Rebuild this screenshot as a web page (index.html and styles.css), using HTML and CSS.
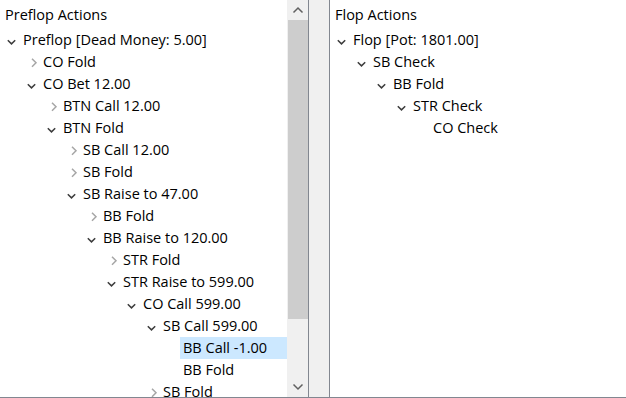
FILE: index.html
```html
<!DOCTYPE html>
<html>
<head>
<meta charset="utf-8">
<link rel="stylesheet" href="styles.css">
</head>
<body>
<div class="window">
  <div class="panel panel-left">
    <div class="tree">
      <div class="header">Preflop Actions</div>
      <div class="row l0"><svg class="tog open" viewBox="0 0 16 22"><path d="M3.8 11.2 L7.5 14.9 L11.2 11.2"/></svg><span>Preflop [Dead Money: 5.00]</span></div>
      <div class="row l1"><svg class="tog closed" viewBox="0 0 16 22"><path d="M8 7.8 L12 11.8 L8 15.8"/></svg><span>CO Fold</span></div>
      <div class="row l1"><svg class="tog open" viewBox="0 0 16 22"><path d="M3.8 11.2 L7.5 14.9 L11.2 11.2"/></svg><span>CO Bet 12.00</span></div>
      <div class="row l2"><svg class="tog closed" viewBox="0 0 16 22"><path d="M8 7.8 L12 11.8 L8 15.8"/></svg><span>BTN Call 12.00</span></div>
      <div class="row l2"><svg class="tog open" viewBox="0 0 16 22"><path d="M3.8 11.2 L7.5 14.9 L11.2 11.2"/></svg><span>BTN Fold</span></div>
      <div class="row l3"><svg class="tog closed" viewBox="0 0 16 22"><path d="M8 7.8 L12 11.8 L8 15.8"/></svg><span>SB Call 12.00</span></div>
      <div class="row l3"><svg class="tog closed" viewBox="0 0 16 22"><path d="M8 7.8 L12 11.8 L8 15.8"/></svg><span>SB Fold</span></div>
      <div class="row l3"><svg class="tog open" viewBox="0 0 16 22"><path d="M3.8 11.2 L7.5 14.9 L11.2 11.2"/></svg><span>SB Raise to 47.00</span></div>
      <div class="row l4"><svg class="tog closed" viewBox="0 0 16 22"><path d="M8 7.8 L12 11.8 L8 15.8"/></svg><span>BB Fold</span></div>
      <div class="row l4"><svg class="tog open" viewBox="0 0 16 22"><path d="M3.8 11.2 L7.5 14.9 L11.2 11.2"/></svg><span>BB Raise to 120.00</span></div>
      <div class="row l5"><svg class="tog closed" viewBox="0 0 16 22"><path d="M8 7.8 L12 11.8 L8 15.8"/></svg><span>STR Fold</span></div>
      <div class="row l5"><svg class="tog open" viewBox="0 0 16 22"><path d="M3.8 11.2 L7.5 14.9 L11.2 11.2"/></svg><span>STR Raise to 599.00</span></div>
      <div class="row l6"><svg class="tog open" viewBox="0 0 16 22"><path d="M3.8 11.2 L7.5 14.9 L11.2 11.2"/></svg><span>CO Call 599.00</span></div>
      <div class="row l7"><svg class="tog open" viewBox="0 0 16 22"><path d="M3.8 11.2 L7.5 14.9 L11.2 11.2"/></svg><span>SB Call 599.00</span></div>
      <div class="row l8"><span class="tog"></span><span class="sel">BB Call -1.00</span></div>
      <div class="row l8"><span class="tog"></span><span>BB Fold</span></div>
      <div class="row l7"><svg class="tog closed" viewBox="0 0 16 22"><path d="M8 7.8 L12 11.8 L8 15.8"/></svg><span>SB Fold</span></div>
    </div>
    <div class="scrollbar">
      <div class="sb-btn"><svg viewBox="0 0 20 20"><path d="M5.5 12.5 L10 8 L14.5 12.5"/></svg></div>
      <div class="sb-track"><div class="sb-thumb"></div></div>
      <div class="sb-btn"><svg viewBox="0 0 20 20"><path d="M5.5 7.5 L10 12 L14.5 7.5"/></svg></div>
    </div>
  </div>
  <div class="splitter"></div>
  <div class="panel panel-right">
    <div class="tree">
      <div class="header">Flop Actions</div>
      <div class="row l0"><svg class="tog open" viewBox="0 0 16 22"><path d="M3.8 11.2 L7.5 14.9 L11.2 11.2"/></svg><span>Flop [Pot: 1801.00]</span></div>
      <div class="row l1"><svg class="tog open" viewBox="0 0 16 22"><path d="M3.8 11.2 L7.5 14.9 L11.2 11.2"/></svg><span>SB Check</span></div>
      <div class="row l2"><svg class="tog open" viewBox="0 0 16 22"><path d="M3.8 11.2 L7.5 14.9 L11.2 11.2"/></svg><span>BB Fold</span></div>
      <div class="row l3"><svg class="tog open" viewBox="0 0 16 22"><path d="M3.8 11.2 L7.5 14.9 L11.2 11.2"/></svg><span>STR Check</span></div>
      <div class="row l4"><span class="tog"></span><span>CO Check</span></div>
    </div>
  </div>
</div>
</body>
</html>
```

FILE: styles.css
```css
html, body {
  margin: 0;
  padding: 0;
  background: #ffffff;
}
body {
  font-family: "Open Sans", "Noto Sans", sans-serif;
  font-size: 14.5px;
  color: #000000;
}
.window {
  display: flex;
  width: 626px;
  height: 397px;
  border-bottom: 1px solid #828790;
  overflow: hidden;
}
.panel {
  display: flex;
  height: 397px;
  background: #ffffff;
  overflow: hidden;
}
.panel-left {
  width: 308px;
  border-right: 1px solid #828790;
}
.panel-right {
  flex: 1;
  border-left: 1px solid #828790;
}
.splitter {
  width: 20px;
  background: #f0f0f0;
}
.tree {
  flex: 1;
  overflow: hidden;
  padding-left: 4px;
}
.header {
  height: 29px;
  line-height: 22px;
  padding-top: 4px;
  padding-left: 1px;
  box-sizing: border-box;
  white-space: nowrap;
}
.row {
  display: flex;
  align-items: center;
  height: 22px;
  white-space: nowrap;
}
.row span {
  line-height: 22px;
}
.tog {
  flex: none;
  width: 16px;
  height: 22px;
  margin-right: 3px;
}
.tog path {
  fill: none;
  stroke-width: 1.5;
}
.tog.open path {
  stroke: #3c3c3c;
}
.tog.closed path {
  stroke: #a6a6a6;
}
.sel {
  flex: 1;
  background: #cce8ff;
  padding: 0 3px;
  margin-left: -3px;
}
.l1 { padding-left: 20px; }
.l2 { padding-left: 40px; }
.l3 { padding-left: 60px; }
.l4 { padding-left: 80px; }
.l5 { padding-left: 100px; }
.l6 { padding-left: 120px; }
.l7 { padding-left: 140px; }
.l8 { padding-left: 160px; }
.scrollbar {
  flex: none;
  width: 21px;
  display: flex;
  flex-direction: column;
  background: #f0f0f0;
}
.sb-btn {
  height: 20px;
  display: flex;
  justify-content: center;
  align-items: center;
}
.sb-btn svg {
  width: 20px;
  height: 20px;
}
.sb-btn path {
  fill: none;
  stroke: #606060;
  stroke-width: 1.5;
}
.sb-track {
  flex: 1;
  padding-left: 1px;
}
.sb-thumb {
  height: 299px;
  background: #cdcdcd;
}
```
